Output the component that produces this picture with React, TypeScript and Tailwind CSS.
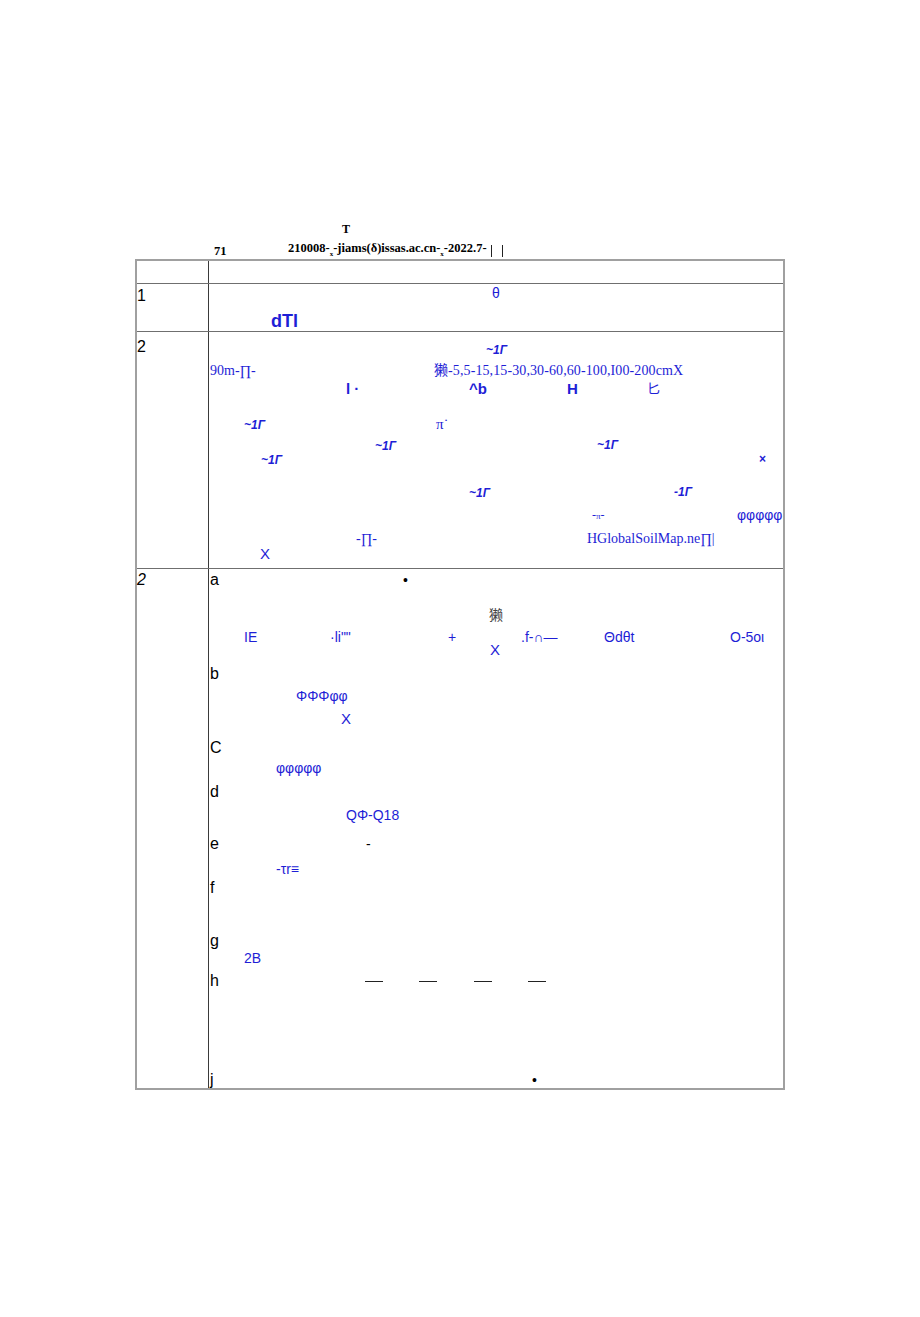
import React from "react";

const BLUE = "text-[#1e1ed6]";

function Gamma({ dash = "~" }: { dash?: string }) {
  return (
    <span className={`${BLUE} font-bold italic text-[12px] leading-[14px]`}>{dash}1Γ</span>
  );
}

export default function App() {
  return (
    <div className="w-[920px] h-[1317px] bg-white font-['Liberation_Sans','Noto_Sans_CJK_SC',sans-serif] text-black">
      <div className="pt-[221px]">
        <div className="h-[16px] pl-[342px] font-['Liberation_Serif',serif] font-bold text-[12px] leading-[16px]">T</div>
        <div className="mt-[6px] h-[16px] flex items-center font-['Liberation_Serif',serif] font-bold text-[12.5px] leading-[16px] whitespace-nowrap">
          <span className="pl-[214px] w-[288px] shrink-0">71</span>
          <span>
            210008-<span className="text-[7px] align-sub">x</span>-jiams(δ)issas.ac.cn-<span className="text-[7px] align-sub">x</span>-2022.7-
          </span>
          <span className="ml-[4px] w-[1px] h-[12px] bg-[#222] shrink-0" />
          <span className="ml-[10px] w-[1px] h-[12px] bg-[#222] shrink-0" />
        </div>
      </div>

      <div className="ml-[135px] w-[650px] border-2 border-[#a0a0a0]">
        {/* header row */}
        <div className="grid grid-cols-[71px_1fr] h-[22px]">
          <div />
          <div className="border-l border-[#3a3a3a]" />
        </div>

        {/* row 1 */}
        <div className="grid grid-cols-[71px_1fr] h-[48px] border-t border-[#6f6f6f]">
          <div className="pt-[3px] text-[16px] leading-[18px]">1</div>
          <div className="border-l border-[#3a3a3a]">
            <div className={`mt-[1px] h-[16px] pl-[283px] text-[14px] leading-[16px] ${BLUE}`}>θ</div>
            <div className={`mt-[10px] h-[20px] pl-[62px] text-[18px] leading-[20px] font-bold ${BLUE}`}>dTl</div>
          </div>
        </div>

        {/* row 2 */}
        <div className="grid grid-cols-[71px_1fr] h-[237px] border-t border-[#6f6f6f]">
          <div className="pt-[6px] text-[16px] leading-[18px]">2</div>
          <div className="border-l border-[#3a3a3a] whitespace-nowrap">
            <div className="mt-[11px] h-[14px] pl-[277px] flex items-center"><Gamma /></div>
            <div className={`mt-[7px] h-[14px] pl-[1px] flex items-center font-['Liberation_Serif','Noto_Sans_CJK_SC',serif] text-[14px] leading-[14px] ${BLUE}`}>
              <span className="w-[224px] shrink-0">90m-∏-</span>
              <span className="tracking-[0.1px]">獭-5,5-15,15-30,30-60,60-100,I00-200cmX</span>
            </div>
            <div className={`mt-[3px] h-[16px] pl-[137px] flex items-center text-[15px] leading-[16px] font-bold ${BLUE}`}>
              <span className="w-[123px] shrink-0">l&nbsp;·</span>
              <span className="w-[98px] shrink-0">^b</span>
              <span className="w-[80px] shrink-0">H</span>
              <span className="font-normal text-[13px]">匕</span>
            </div>
            <div className="mt-[20px] h-[14px] pl-[35px] flex items-center">
              <span className="w-[192px] shrink-0"><Gamma /></span>
              <span className={`font-['Liberation_Serif',serif] text-[15px] leading-[14px] ${BLUE}`}>π˙</span>
            </div>
            <div className="mt-[7px] h-[14px] pl-[166px] flex items-center">
              <span className="w-[222px] shrink-0"><Gamma /></span>
              <Gamma />
            </div>
            <div className="h-[14px] pl-[52px] flex items-center">
              <span className="w-[498px] shrink-0"><Gamma /></span>
              <span className={`font-bold text-[12px] leading-[14px] ${BLUE}`}>×</span>
            </div>
            <div className="mt-[19px] h-[14px] pl-[260px] flex items-center">
              <span className="w-[205px] shrink-0"><Gamma /></span>
              <Gamma dash="-" />
            </div>
            <div className={`mt-[9px] h-[14px] pl-[383px] flex items-center ${BLUE}`}>
              <span className="w-[145px] shrink-0 font-['Liberation_Serif',serif] text-[12px] leading-[14px]">-<span className="text-[9px]">π</span>-</span>
              <span className="text-[14px] leading-[14px]">φφφφφ</span>
            </div>
            <div className={`mt-[10px] h-[14px] pl-[147px] flex items-center font-['Liberation_Serif',serif] text-[14px] leading-[14px] ${BLUE}`}>
              <span className="w-[231px] shrink-0">-∏-</span>
              <span>HGlobalSoilMap.ne∏|</span>
            </div>
            <div className={`h-[16px] pl-[51px] text-[15px] leading-[16px] ${BLUE}`}>X</div>
          </div>
        </div>

        {/* row 3 */}
        <div className="grid grid-cols-[71px_1fr] h-[520px] border-t border-[#6f6f6f]">
          <div className="pt-[2px] text-[16px] leading-[18px] italic">2</div>
          <div className="border-l border-[#3a3a3a] whitespace-nowrap">
            <div className="mt-[3px] h-[16px] pl-[1px] flex items-center text-[16px] leading-[16px]">
              <span className="w-[193px] shrink-0">a</span>
              <span className="text-[14px]">•</span>
            </div>
            <div className="mt-[20px] h-[14px] pl-[280px] text-[14px] leading-[14px] text-[#444]">獭</div>
            <div className={`mt-[8px] h-[14px] pl-[35px] flex items-center text-[14px] leading-[14px] ${BLUE}`}>
              <span className="w-[86px] shrink-0">IE</span>
              <span className="w-[118px] shrink-0">·li""</span>
              <span className="w-[73px] shrink-0">+</span>
              <span className="w-[83px] shrink-0">.f-∩—</span>
              <span className="w-[126px] shrink-0">Θdθt</span>
              <span>O-5oι</span>
            </div>
            <div className={`-mt-[1px] h-[14px] pl-[281px] text-[15px] leading-[14px] ${BLUE}`}>X</div>
            <div className="mt-[9px] h-[16px] pl-[1px] text-[16px] leading-[16px]">b</div>
            <div className={`mt-[7px] h-[14px] pl-[87px] text-[14px] leading-[14px] ${BLUE}`}>ΦΦΦφφ</div>
            <div className={`mt-[9px] h-[14px] pl-[132px] text-[15px] leading-[14px] ${BLUE}`}>X</div>
            <div className="mt-[14px] h-[16px] pl-[1px] text-[16px] leading-[16px]">C</div>
            <div className={`mt-[5px] h-[14px] pl-[67px] text-[14px] leading-[14px] ${BLUE}`}>φφφφφ</div>
            <div className="mt-[9px] h-[16px] pl-[1px] text-[16px] leading-[16px]">d</div>
            <div className={`mt-[8px] h-[14px] pl-[137px] text-[14px] leading-[14px] ${BLUE}`}>QΦ-Q18</div>
            <div className="mt-[14px] h-[16px] pl-[1px] flex items-center text-[16px] leading-[16px]">
              <span className="w-[156px] shrink-0">e</span>
              <span className="text-[14px]">-</span>
            </div>
            <div className={`mt-[10px] h-[14px] pl-[67px] text-[14px] leading-[14px] ${BLUE}`}>-τr≡</div>
            <div className="mt-[4px] h-[16px] pl-[1px] text-[16px] leading-[16px]">f</div>
            <div className="mt-[37px] h-[16px] pl-[1px] text-[16px] leading-[16px]">g</div>
            <div className={`mt-[2px] h-[14px] pl-[35px] text-[14px] leading-[14px] ${BLUE}`}>2B</div>
            <div className="mt-[8px] h-[16px] pl-[1px] flex items-center text-[16px] leading-[16px]">
              <span className="w-[155px] shrink-0">h</span>
              <span className="w-[18px] h-[1px] bg-[#222] shrink-0" />
              <span className="w-[36px] shrink-0" />
              <span className="w-[18px] h-[1px] bg-[#222] shrink-0" />
              <span className="w-[37px] shrink-0" />
              <span className="w-[18px] h-[1px] bg-[#222] shrink-0" />
              <span className="w-[36px] shrink-0" />
              <span className="w-[18px] h-[1px] bg-[#222] shrink-0" />
            </div>
            <div className="mt-[83px] h-[16px] pl-[1px] flex items-center text-[16px] leading-[16px]">
              <span className="w-[322px] shrink-0">j</span>
              <span className="text-[14px]">•</span>
            </div>
          </div>
        </div>
      </div>
    </div>
  );
}
